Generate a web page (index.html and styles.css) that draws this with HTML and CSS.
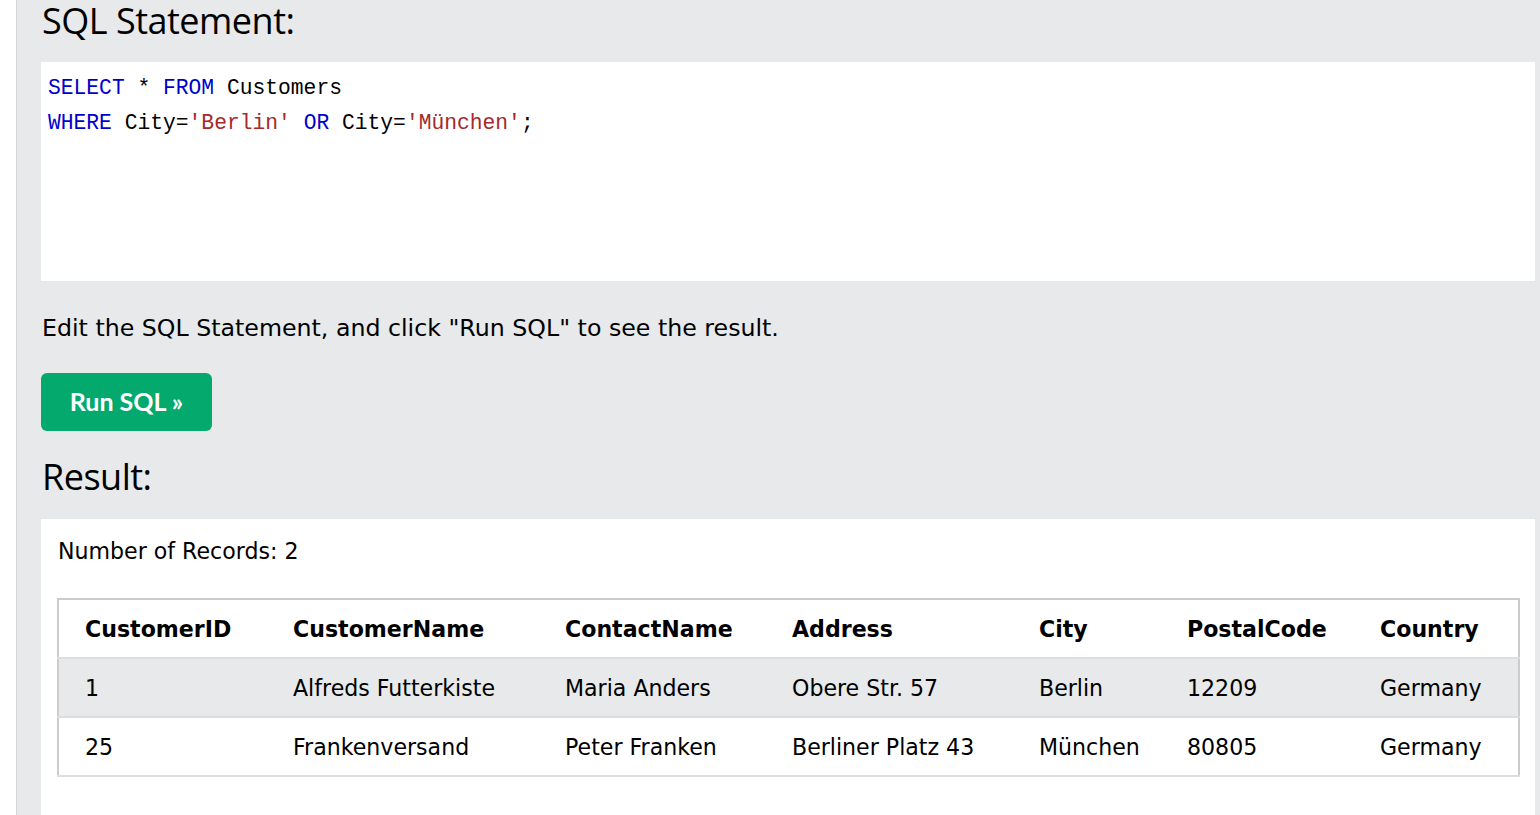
FILE: index.html
```html
<!DOCTYPE html>
<html lang="en">
<head>
<meta charset="utf-8">
<title>SQL Tryit</title>
<link rel="stylesheet" href="styles.css">
</head>
<body>
<div class="page">
  <div class="side"></div>
  <main class="main">
    <h2 class="heading heading-top">SQL Statement:</h2>
    <div class="code">
      <div class="code-line"><span class="kw">SELECT</span> * <span class="kw">FROM</span> Customers</div>
      <div class="code-line"><span class="kw">WHERE</span> City=<span class="str">'Berlin'</span> <span class="kw">OR</span> City=<span class="str">'München'</span>;</div>
    </div>
    <p class="hint">Edit the SQL Statement, and click "Run SQL" to see the result.</p>
    <button class="run">Run SQL »</button>
    <h2 class="heading heading-result">Result:</h2>
    <div class="result">
      <div class="count">Number of Records: 2</div>
      <table class="grid">
        <thead>
          <tr>
            <th class="c1">CustomerID</th>
            <th class="c2">CustomerName</th>
            <th class="c3">ContactName</th>
            <th class="c4">Address</th>
            <th class="c5">City</th>
            <th class="c6">PostalCode</th>
            <th class="c7">Country</th>
          </tr>
        </thead>
        <tbody>
          <tr class="odd">
            <td>1</td>
            <td>Alfreds Futterkiste</td>
            <td>Maria Anders</td>
            <td>Obere Str. 57</td>
            <td>Berlin</td>
            <td>12209</td>
            <td>Germany</td>
          </tr>
          <tr>
            <td>25</td>
            <td>Frankenversand</td>
            <td>Peter Franken</td>
            <td>Berliner Platz 43</td>
            <td>München</td>
            <td>80805</td>
            <td>Germany</td>
          </tr>
        </tbody>
      </table>
    </div>
  </main>
</div>
</body>
</html>
```

FILE: styles.css
```css
html, body {
  margin: 0;
  padding: 0;
  height: 100%;
  overflow: hidden;
  background: #ffffff;
}

.page {
  display: flex;
  height: 815px;
}

.side {
  width: 16px;
  flex: 0 0 16px;
  background: #ffffff;
  border-right: 1px solid #d6d6d6;
}

.main {
  flex: 1;
  background: #e7e9eb;
  padding: 0 5px 0 24px;
  overflow: hidden;
}

.heading {
  margin: 0;
  font-family: "Open Sans", "Noto Sans", sans-serif;
  font-weight: 400;
  font-size: 36px;
  color: #000;
  letter-spacing: -0.5px;
  padding-left: 1px;
}

.heading-top {
  height: 62px;
  line-height: 42px;
}

.code {
  background: #ffffff;
  height: 219px;
  box-sizing: border-box;
  padding: 9px 7px 0 7px;
  font-family: "Liberation Mono", "DejaVu Sans Mono", monospace;
  font-size: 21.3px;
  line-height: 35px;
  color: #000;
}

.kw { color: #0000cd; }
.str { color: #a52a2a; }

.hint {
  margin: 0;
  padding: 29px 0 0 1px;
  height: 92px;
  box-sizing: border-box;
  font-family: "DejaVu Sans", Verdana, sans-serif;
  font-size: 23.7px;
  line-height: 36px;
  color: #000;
}

.run {
  display: block;
  width: 171px;
  height: 58px;
  border: none;
  border-radius: 6px;
  background: #04aa6d;
  color: #ffffff;
  font-family: "Lato", "Open Sans", sans-serif;
  font-weight: 700;
  font-size: 25px;
  padding: 0 0 2px 0;
  margin: 0;
}

.heading-result {
  height: 88px;
  line-height: 92px;
}

.result {
  background: #ffffff;
  height: 300px;
  padding: 15px 15px 0 16px;
  box-sizing: border-box;
  font-family: "DejaVu Sans", Verdana, sans-serif;
  color: #000;
}

.count {
  font-size: 22.1px;
  line-height: 34px;
  padding-left: 1px;
  height: 64px;
}

.grid {
  width: 1463px;
  border-collapse: collapse;
  border: 2px solid #cccccc;
  font-size: 22.1px;
  table-layout: fixed;
}

.grid th,
.grid td {
  box-sizing: border-box;
  text-align: left;
  padding: 0 0 0 26px;
  border-bottom: 2px solid #dddddd;
  white-space: nowrap;
  overflow: hidden;
}

.grid th {
  height: 59px;
  font-weight: 700;
}

.grid td {
  height: 59px;
}

.grid tr.odd td {
  background: #e7e9eb;
}

.c1 { width: 209px; }
.c2 { width: 272px; }
.c3 { width: 227px; }
.c4 { width: 247px; }
.c5 { width: 148px; }
.c6 { width: 193px; }
.c7 { width: auto; }
```
